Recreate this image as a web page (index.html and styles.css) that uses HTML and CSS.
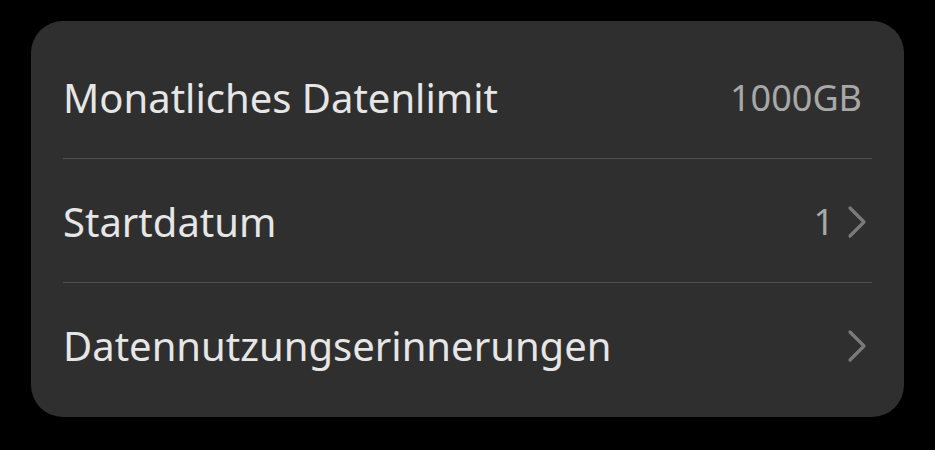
FILE: index.html
```html
<!DOCTYPE html>
<html lang="de">
<head>
<meta charset="utf-8">
<title>Datenlimit</title>
<link rel="stylesheet" href="styles.css">
</head>
<body>
<div class="card">
  <div class="row">
    <span class="label">Monatliches Datenlimit</span>
    <span class="value solo">1000GB</span>
  </div>
  <div class="row">
    <span class="label">Startdatum</span>
    <span class="trail">
      <span class="value">1</span>
      <svg class="chev" width="20" height="34" viewBox="0 0 20 34"><polyline points="3,3 17,17 3,31" fill="none" stroke="#7a7a7a" stroke-width="3.2" stroke-linecap="round" stroke-linejoin="round"/></svg>
    </span>
  </div>
  <div class="row">
    <span class="label">Datennutzungserinnerungen</span>
    <span class="trail">
      <svg class="chev" width="20" height="34" viewBox="0 0 20 34"><polyline points="3,3 17,17 3,31" fill="none" stroke="#7a7a7a" stroke-width="3.2" stroke-linecap="round" stroke-linejoin="round"/></svg>
    </span>
  </div>
</div>
</body>
</html>
```
FILE: styles.css
```css
html, body {
  margin: 0;
  padding: 0;
  background: #000;
}
body {
  width: 935px;
  height: 450px;
  padding: 21px 31px 0 31px;
  box-sizing: border-box;
  font-family: "Noto Sans", Roboto, sans-serif;
}
.card {
  background: #2f2f2f;
  border-radius: 32px;
  height: 396px;
  padding: 13px 32px 0 32px;
  box-sizing: border-box;
}
.row {
  height: 124px;
  display: flex;
  align-items: center;
  justify-content: space-between;
  box-sizing: border-box;
  padding-top: 3px;
}
.row + .row {
  border-top: 1px solid #505050;
}
.label {
  color: #e6e6e6;
  font-size: 40px;
  line-height: 1;
}
.value {
  color: #a8a8a8;
  font-size: 36px;
  line-height: 1;
}
.value.solo {
  margin-right: 10px;
}
.trail {
  display: flex;
  align-items: center;
  gap: 13px;
  margin-right: 5px;
}
.chev {
  display: block;
}
```
